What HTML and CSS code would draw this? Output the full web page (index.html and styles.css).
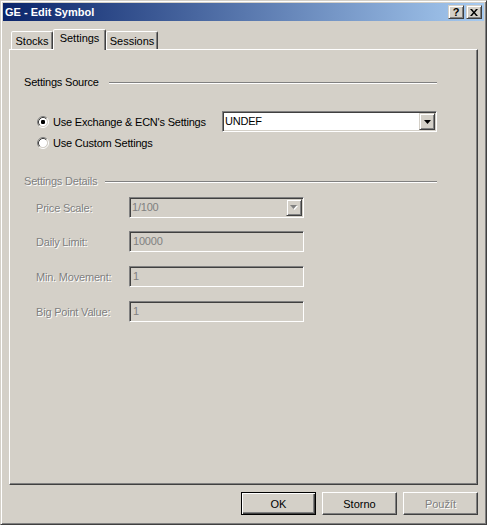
FILE: index.html
```html
<!DOCTYPE html>
<html>
<head>
<meta charset="utf-8">
<title>GE - Edit Symbol</title>
<link rel="stylesheet" href="styles.css">
</head>
<body>
<div class="window">
  <div class="titlebar">
    <span class="title">GE - Edit Symbol</span>
    <div class="caption-buttons">
      <div class="cap-btn help">?</div>
      <div class="cap-btn close">
        <svg width="8" height="7" viewBox="0 0 8 7"><path d="M0 0h2l2 2.4 2-2.4h2l-3 3.5 3 3.5h-2l-2-2.4-2 2.4h-2l3-3.5z" fill="#000"/></svg>
      </div>
    </div>
  </div>

  <div class="tabs">
    <div class="tab tab-stocks">Stocks</div>
    <div class="tab tab-active">Settings</div>
    <div class="tab tab-sessions">Sessions</div>
  </div>

  <div class="panel">
    <div class="group-header">
      <span class="group-title source-title">Settings Source</span>
      <div class="etch"></div>
    </div>

    <div class="radio-row row-first">
      <svg class="radio" width="12" height="12" viewBox="0 0 12 12">
        <circle cx="6" cy="6" r="4.2" fill="#fff"/>
        <path d="M2.11 9.89A5.5 5.5 0 0 1 9.89 2.11" fill="none" stroke="#808080"/>
        <path d="M9.89 2.11A5.5 5.5 0 0 1 2.11 9.89" fill="none" stroke="#fff"/>
        <path d="M2.82 9.18A4.5 4.5 0 0 1 9.18 2.82" fill="none" stroke="#404040"/>
        <path d="M9.18 2.82A4.5 4.5 0 0 1 2.82 9.18" fill="none" stroke="#D4D0C8"/>
        <rect x="4" y="4" width="4" height="4" rx="1.2" fill="#000"/>
      </svg>
      <span class="radio-label">Use Exchange &amp; ECN's Settings</span>
      <div class="combo">
        <span class="combo-text">UNDEF</span>
        <div class="combo-btn">
          <svg width="7" height="4" viewBox="0 0 7 4"><path d="M0 0h7l-3.5 4z" fill="#000"/></svg>
        </div>
      </div>
    </div>

    <div class="radio-row row-second">
      <svg class="radio" width="12" height="12" viewBox="0 0 12 12">
        <circle cx="6" cy="6" r="4.2" fill="#fff"/>
        <path d="M2.11 9.89A5.5 5.5 0 0 1 9.89 2.11" fill="none" stroke="#808080"/>
        <path d="M9.89 2.11A5.5 5.5 0 0 1 2.11 9.89" fill="none" stroke="#fff"/>
        <path d="M2.82 9.18A4.5 4.5 0 0 1 9.18 2.82" fill="none" stroke="#404040"/>
        <path d="M9.18 2.82A4.5 4.5 0 0 1 2.82 9.18" fill="none" stroke="#D4D0C8"/>
      </svg>
      <span class="radio-label">Use Custom Settings</span>
    </div>

    <div class="group-header details-header">
      <span class="group-title details-title disabled">Settings Details</span>
      <div class="etch"></div>
    </div>

    <div class="field-row field-first">
      <span class="field-label disabled">Price Scale:</span>
      <div class="combo combo-disabled">
        <span class="combo-text">1/100</span>
        <div class="combo-btn">
          <svg width="8" height="5" viewBox="0 0 8 5"><path d="M1 1h7l-3.5 4z" fill="#fff"/><path d="M0 0h7l-3.5 4z" fill="#808080"/></svg>
        </div>
      </div>
    </div>

    <div class="field-row field-second">
      <span class="field-label disabled">Daily Limit:</span>
      <div class="edit">10000</div>
    </div>

    <div class="field-row">
      <span class="field-label disabled">Min. Movement:</span>
      <div class="edit">1</div>
    </div>

    <div class="field-row">
      <span class="field-label disabled">Big Point Value:</span>
      <div class="edit">1</div>
    </div>
  </div>

  <div class="buttons">
    <div class="btn btn-default">OK</div>
    <div class="btn">Storno</div>
    <div class="btn btn-disabled">Použít</div>
  </div>
</div>
</body>
</html>
```
FILE: styles.css
```css
html, body {
  margin: 0;
  padding: 0;
  background: #D4D0C8;
}

body {
  font-family: "Liberation Sans", Arial, sans-serif;
  font-size: 11px;
  letter-spacing: -0.2px;
  color: #000;
}

.window {
  width: 487px;
  height: 525px;
  box-sizing: border-box;
  background: #D4D0C8;
  border: 1px solid;
  border-color: #D4D0C8 #404040 #404040 #D4D0C8;
  box-shadow: inset 1px 1px 0 #fff, inset -1px -1px 0 #808080;
  padding: 2px;
  display: flex;
  flex-direction: column;
}

/* Title bar */
.titlebar {
  height: 18px;
  flex: none;
  background: linear-gradient(to right, #0A246A, #A6CAF0);
  display: flex;
  align-items: center;
  justify-content: space-between;
  padding: 0 2px;
  color: #fff;
  font-weight: bold;
  letter-spacing: 0;
}

.title {
  line-height: 14px;
}

.caption-buttons {
  display: flex;
  gap: 2px;
}

.cap-btn {
  width: 16px;
  height: 14px;
  box-sizing: border-box;
  background: #D4D0C8;
  border: 1px solid;
  border-color: #D4D0C8 #404040 #404040 #D4D0C8;
  box-shadow: inset 1px 1px 0 #fff, inset -1px -1px 0 #808080;
  display: flex;
  align-items: center;
  justify-content: center;
  color: #000;
  font-size: 11px;
  font-weight: bold;
  line-height: 12px;
}

.help {
  padding-bottom: 1px;
}

/* Tabs */
.tabs {
  display: flex;
  align-items: flex-end;
  height: 20px;
  margin: 8px 0 0 8px;
  flex: none;
  letter-spacing: 0;
}

.tab {
  height: 18px;
  box-sizing: border-box;
  border: 1px solid;
  border-bottom: none;
  border-color: #fff #404040 transparent #fff;
  border-radius: 2px 2px 0 0;
  box-shadow: inset -1px 0 0 #808080;
  text-align: center;
  padding-top: 3px;
  line-height: 13px;
  background: #D4D0C8;
}

.tab-stocks {
  width: 42px;
}

.tab-sessions {
  width: 52px;
}

.tab-active {
  width: 53px;
  height: 21px;
  margin-bottom: -1px;
  padding-top: 2px;
  position: relative;
  z-index: 1;
}

/* Panel */
.panel {
  width: 469px;
  height: 436px;
  margin-left: 6px;
  box-sizing: border-box;
  flex: none;
  border: 1px solid;
  border-color: #fff #404040 #404040 #fff;
  box-shadow: inset -1px -1px 0 #808080;
  padding: 25px 40px 0 14px;
}

.group-header {
  display: flex;
  align-items: center;
  height: 14px;
  line-height: 14px;
}

.group-title {
  flex: none;
}

.source-title {
  width: 85px;
}

.details-title {
  width: 81px;
}

.etch {
  flex: 1;
  height: 0;
  border-top: 1px solid #808080;
  border-bottom: 1px solid #fff;
  margin-top: 1px;
}

.details-header {
  margin-top: 24px;
}

.disabled {
  color: #808080;
  text-shadow: 1px 1px 0 #fff;
}

/* Radio rows */
.radio-row {
  display: flex;
  align-items: center;
  padding-left: 13px;
}

.row-first {
  height: 21px;
  margin-top: 22px;
}

.row-second {
  height: 14px;
  margin-top: 4px;
}

.radio {
  flex: none;
  display: block;
}

.radio-label {
  margin-left: 4px;
  line-height: 14px;
}

/* Combo boxes */
.combo {
  width: 215px;
  height: 21px;
  margin-left: auto;
  box-sizing: border-box;
  border: 1px solid;
  border-color: #808080 #fff #fff #808080;
  box-shadow: inset 1px 1px 0 #404040, inset -1px -1px 0 #D4D0C8;
  background: #fff;
  padding: 1px;
  display: flex;
}

.combo-text {
  flex: 1;
  padding-left: 1px;
  line-height: 17px;
}

.combo-btn {
  width: 16px;
  height: 17px;
  box-sizing: border-box;
  background: #D4D0C8;
  border: 1px solid;
  border-color: #D4D0C8 #404040 #404040 #D4D0C8;
  box-shadow: inset 1px 1px 0 #fff, inset -1px -1px 0 #808080;
  display: flex;
  align-items: center;
  justify-content: center;
}

.combo-disabled {
  width: 175px;
  margin-left: 0;
  background: #D4D0C8;
  color: #808080;
}

/* Field rows */
.field-row {
  display: flex;
  align-items: center;
  height: 21px;
  padding-left: 12px;
  margin-top: 14px;
}

.field-first {
  margin-top: 9px;
}

.field-second {
  margin-top: 13px;
}

.field-label {
  width: 93px;
  flex: none;
}

.edit {
  width: 175px;
  height: 21px;
  box-sizing: border-box;
  border: 1px solid;
  border-color: #808080 #fff #fff #808080;
  box-shadow: inset 1px 1px 0 #404040, inset -1px -1px 0 #D4D0C8;
  background: #D4D0C8;
  color: #808080;
  padding: 1px 3px;
  line-height: 17px;
}

/* Buttons */
.buttons {
  display: flex;
  justify-content: flex-end;
  gap: 6px;
  margin: 7px 6px 0 0;
  flex: none;
  letter-spacing: 0;
}

.btn {
  width: 75px;
  height: 23px;
  box-sizing: border-box;
  background: #D4D0C8;
  border: 1px solid;
  border-color: #fff #404040 #404040 #fff;
  box-shadow: inset -1px -1px 0 #808080;
  display: flex;
  align-items: center;
  justify-content: center;
}

.btn-default {
  border-color: #000;
  box-shadow: inset 1px 1px 0 #fff, inset -1px -1px 0 #404040, inset -2px -2px 0 #808080;
}

.btn-disabled {
  color: #808080;
  text-shadow: 1px 1px 0 #fff;
}
```
